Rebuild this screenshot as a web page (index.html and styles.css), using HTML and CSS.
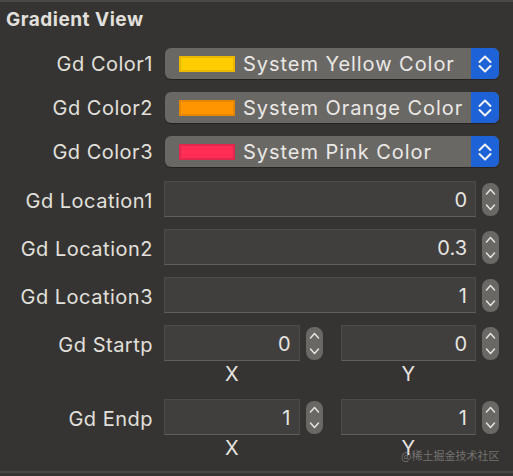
FILE: index.html
```html
<!DOCTYPE html>
<html>
<head>
<meta charset="utf-8">
<link rel="stylesheet" href="styles.css">
</head>
<body>
<div class="panel">
  <h1 class="title">Gradient View</h1>

  <div class="group popups">
    <div class="row popup-row">
      <div class="label">Gd Color1</div>
      <div class="popup">
        <span class="swatch yellow"></span>
        <span class="popup-text">System Yellow Color</span>
        <span class="popup-arrows"><svg width="28" height="31" viewBox="0 0 28 31"><path d="M8.5 14 L14 8.5 L19.5 14 M8.5 18 L14 23.5 L19.5 18" fill="none" stroke="#f2f2f2" stroke-width="2" stroke-linecap="round" stroke-linejoin="round"/></svg></span>
      </div>
    </div>
    <div class="row popup-row">
      <div class="label">Gd Color2</div>
      <div class="popup">
        <span class="swatch orange"></span>
        <span class="popup-text">System Orange Color</span>
        <span class="popup-arrows"><svg width="28" height="31" viewBox="0 0 28 31"><path d="M8.5 14 L14 8.5 L19.5 14 M8.5 18 L14 23.5 L19.5 18" fill="none" stroke="#f2f2f2" stroke-width="2" stroke-linecap="round" stroke-linejoin="round"/></svg></span>
      </div>
    </div>
    <div class="row popup-row">
      <div class="label">Gd Color3</div>
      <div class="popup">
        <span class="swatch pink"></span>
        <span class="popup-text">System Pink Color</span>
        <span class="popup-arrows"><svg width="28" height="31" viewBox="0 0 28 31"><path d="M8.5 14 L14 8.5 L19.5 14 M8.5 18 L14 23.5 L19.5 18" fill="none" stroke="#f2f2f2" stroke-width="2" stroke-linecap="round" stroke-linejoin="round"/></svg></span>
      </div>
    </div>
  </div>

  <div class="group locations">
    <div class="row field-row">
      <div class="label">Gd Location1</div>
      <div class="num-group">
        <div class="field">0</div>
        <div class="stepper"><svg width="17" height="33" viewBox="0 0 17 33"><path d="M4.5 11 L8.5 6.5 L12.5 11 M4.5 22 L8.5 26.5 L12.5 22" fill="none" stroke="#e6e4e1" stroke-width="1.5" stroke-linecap="round" stroke-linejoin="round"/></svg></div>
      </div>
    </div>
    <div class="row field-row">
      <div class="label">Gd Location2</div>
      <div class="num-group">
        <div class="field">0.3</div>
        <div class="stepper"><svg width="17" height="33" viewBox="0 0 17 33"><path d="M4.5 11 L8.5 6.5 L12.5 11 M4.5 22 L8.5 26.5 L12.5 22" fill="none" stroke="#e6e4e1" stroke-width="1.5" stroke-linecap="round" stroke-linejoin="round"/></svg></div>
      </div>
    </div>
    <div class="row field-row">
      <div class="label">Gd Location3</div>
      <div class="num-group">
        <div class="field">1</div>
        <div class="stepper"><svg width="17" height="33" viewBox="0 0 17 33"><path d="M4.5 11 L8.5 6.5 L12.5 11 M4.5 22 L8.5 26.5 L12.5 22" fill="none" stroke="#e6e4e1" stroke-width="1.5" stroke-linecap="round" stroke-linejoin="round"/></svg></div>
      </div>
    </div>
  </div>

  <div class="group point start">
    <div class="row field-row">
      <div class="label">Gd Startp</div>
      <div class="pair">
        <div class="num-group">
          <div class="field">0</div>
          <div class="stepper"><svg width="17" height="33" viewBox="0 0 17 33"><path d="M4.5 11 L8.5 6.5 L12.5 11 M4.5 22 L8.5 26.5 L12.5 22" fill="none" stroke="#e6e4e1" stroke-width="1.5" stroke-linecap="round" stroke-linejoin="round"/></svg></div>
        </div>
        <div class="num-group">
          <div class="field">0</div>
          <div class="stepper"><svg width="17" height="33" viewBox="0 0 17 33"><path d="M4.5 11 L8.5 6.5 L12.5 11 M4.5 22 L8.5 26.5 L12.5 22" fill="none" stroke="#e6e4e1" stroke-width="1.5" stroke-linecap="round" stroke-linejoin="round"/></svg></div>
        </div>
      </div>
    </div>
    <div class="row axis-row">
      <div class="label"></div>
      <div class="pair">
        <div class="axis">X</div>
        <div class="axis">Y</div>
      </div>
    </div>
  </div>

  <div class="group point end">
    <div class="row field-row">
      <div class="label">Gd Endp</div>
      <div class="pair">
        <div class="num-group">
          <div class="field">1</div>
          <div class="stepper"><svg width="17" height="33" viewBox="0 0 17 33"><path d="M4.5 11 L8.5 6.5 L12.5 11 M4.5 22 L8.5 26.5 L12.5 22" fill="none" stroke="#e6e4e1" stroke-width="1.5" stroke-linecap="round" stroke-linejoin="round"/></svg></div>
        </div>
        <div class="num-group">
          <div class="field">1</div>
          <div class="stepper"><svg width="17" height="33" viewBox="0 0 17 33"><path d="M4.5 11 L8.5 6.5 L12.5 11 M4.5 22 L8.5 26.5 L12.5 22" fill="none" stroke="#e6e4e1" stroke-width="1.5" stroke-linecap="round" stroke-linejoin="round"/></svg></div>
        </div>
      </div>
    </div>
    <div class="row axis-row">
      <div class="label"></div>
      <div class="pair">
        <div class="axis">X</div>
        <div class="axis">Y</div>
      </div>
    </div>
  </div>

  <div class="watermark">@稀土掘金技术社区</div>
</div>
</body>
</html>
```

FILE: styles.css
```css
html, body {
  margin: 0;
  padding: 0;
}

body {
  width: 513px;
  height: 476px;
  overflow: hidden;
  background: #363432;
  font-family: Inter, "Noto Sans", "Liberation Sans", sans-serif;
  color: #e4e2df;
}

.panel {
  position: relative;
  height: 469px;
  border-top: 2px solid #4a4846;
  border-bottom: 2px solid #4a4846;
}

.title {
  margin: 7px 0 0 6px;
  font-size: 19px;
  font-weight: 700;
  letter-spacing: 0.5px;
  line-height: 22px;
  color: #e2e0dd;
}

.group {
  display: flex;
  flex-direction: column;
}

.popups {
  margin-top: 17px;
  gap: 13px;
}

.locations {
  margin-top: 14px;
  gap: 12px;
}

.start {
  margin-top: 12px;
}

.end {
  margin-top: 13px;
}

.row {
  display: flex;
  align-items: center;
}

.label {
  width: 153px;
  flex: none;
  text-align: right;
  font-size: 20px;
  letter-spacing: 0.5px;
  color: #e2e0dd;
  white-space: nowrap;
}

.field-row .label {
  padding-top: 4px;
}

.popup-row {
  height: 31px;
}

.popup {
  margin-left: 12px;
  width: 334px;
  height: 31px;
  display: flex;
  align-items: center;
  background: #6a6865;
  border-radius: 6px;
  box-shadow: 0 1px 1px rgba(0, 0, 0, 0.35);
}

.swatch {
  margin-left: 14px;
  width: 56px;
  height: 16px;
  box-sizing: border-box;
  border: 2px solid;
  flex: none;
}

.yellow { background: #ffcc00; border-color: #e8b800; }
.orange { background: #ff9500; border-color: #e58600; }
.pink { background: #ff2d55; border-color: #e0284c; }

.popup-text {
  flex: 1;
  margin-left: 8px;
  font-size: 20px;
  letter-spacing: 0.95px;
  color: #ebe9e6;
  white-space: nowrap;
}

.popup-arrows {
  width: 28px;
  height: 31px;
  flex: none;
  background: #1d62d7;
  border-radius: 0 6px 6px 0;
  display: flex;
}

.field-row {
  height: 36px;
}

.num-group {
  display: flex;
  align-items: center;
  min-width: 0;
}

.row > .num-group {
  margin-left: 11px;
  width: 335px;
}

.field {
  flex: 1;
  min-width: 0;
  height: 36px;
  box-sizing: border-box;
  background: #413f3d;
  border: 1px solid #4d4b49;
  border-bottom-color: #615f5c;
  text-align: right;
  padding: 2px 8px 0 0;
  font-size: 20px;
  line-height: 32px;
  color: #e6e4e1;
}

.stepper {
  margin-left: 6px;
  width: 17px;
  height: 33px;
  flex: none;
  border-radius: 8px;
  background: #6a6865;
  display: flex;
}

.pair {
  margin-left: 11px;
  width: 335px;
  display: grid;
  grid-template-columns: 1fr 1fr;
  column-gap: 18px;
}

.axis-row {
  margin-top: 1px;
  height: 24px;
}

.axis {
  padding-right: 23px;
  text-align: center;
  font-size: 20px;
  line-height: 24px;
  color: #e6e4e1;
}

.watermark {
  position: absolute;
  left: 401px;
  top: 446px;
  font-family: "Noto Sans CJK SC", "Noto Sans", sans-serif;
  font-size: 11px;
  line-height: 14px;
  color: rgba(170, 168, 165, 0.55);
  white-space: nowrap;
}
```
